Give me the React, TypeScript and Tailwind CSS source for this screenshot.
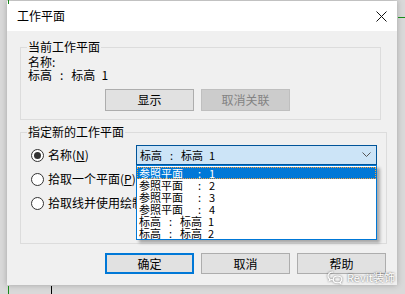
import React from "react"

const ui = "font-['Microsoft_YaHei','Noto_Sans_CJK_SC',sans-serif]"

function Radio({ checked }: { checked?: boolean }) {
  return (
    <span className="w-[13px] h-[13px] rounded-full border border-[#333333] bg-white flex items-center justify-center shrink-0">
      {checked && <span className="w-[7px] h-[7px] rounded-full bg-[#333333]" />}
    </span>
  )
}

function Btn({ label, disabled, primary, h = "h-[22px]" }: { label: string; disabled?: boolean; primary?: boolean; h?: string }) {
  let cls = "bg-[#e1e1e1] border border-[#adadad] text-black"
  if (disabled) cls = "bg-[#cccccc] border border-[#bfbfbf] text-[#838383]"
  if (primary) cls = "bg-[#e1e1e1] border-2 border-[#0078d7] text-black"
  return (
    <div className={`w-[89px] ${h} ${cls} flex items-center justify-center text-[12px] leading-none`}>
      {label}
    </div>
  )
}

// "A : B" text with the wide gaps the dialog font gives
function Level({ name, num, wide }: { name?: string; num: string; wide?: boolean }) {
  return (
    <span className="inline-flex items-baseline">
      <span>{name ? "标高" : "参照平面"}</span>
      <span className={wide ? "ml-[15px]" : "ml-[8px]"}>:</span>
      {name && <span className="ml-[8px]">{name}</span>}
      <span className={name ? "ml-[6px]" : "ml-[8px]"}>{num}</span>
    </span>
  )
}

const items = [
  { num: "1" },
  { num: "2" },
  { num: "3" },
  { num: "4" },
  { name: "标高", num: "1" },
  { name: "标高", num: "2" },
]

export default function App() {
  return (
    <div className={`relative w-[405px] h-[294px] overflow-hidden bg-[#d9d9d9] pt-[1px] pl-[7px] ${ui}`}>
      {/* stray lines behind the dialog */}
      <div className="absolute left-[8px] top-0 w-[1px] h-[4px] bg-[#1a8a1a]" />
      <div className="absolute left-[8px] top-[286px] w-[1px] h-[8px] bg-[#1a8a1a]" />
      <div className="absolute left-[51px] top-[286px] w-[1px] h-[8px] bg-black" />
      <div className="absolute left-[398px] top-[17px] w-[7px] h-[1px] bg-[#1a8a1a]" />

      <div className="w-[390px] h-[284px] bg-[#f0f0f0] flex flex-col shadow-[0_0_6px_rgba(0,0,0,0.25)]">
        <div className="h-[30px] bg-white flex items-center justify-between pl-[10px] pr-[10px] shrink-0">
          <span className="text-[12px] text-black">工作平面</span>
          <svg width="11" height="11" viewBox="0 0 11 11">
            <path d="M0.5 0.5 L10.5 10.5 M10.5 0.5 L0.5 10.5" stroke="#111" strokeWidth="1" />
          </svg>
        </div>

        <div className="flex flex-col pl-[13px] text-[12px] text-black">
          <fieldset className="mt-[9px] w-[361px] border border-[#dcdcdc] pl-[6px] pb-[8px]">
            <legend className="px-[1px] leading-[14px]">当前工作平面</legend>
            <div className="pl-[1px] pt-[1px] leading-[13px]">
              <div>名称:</div>
              <div>
                <Level name="标高" num="1" />
              </div>
            </div>
            <div className="flex gap-[7px] ml-[78px] mt-[8px]">
              <Btn label="显示" />
              <Btn label="取消关联" disabled />
            </div>
          </fieldset>

          <fieldset className="mt-[5px] w-[367px] border border-[#dcdcdc] pl-[6px] pb-[30px]">
            <legend className="px-[1px] leading-[14px]">指定新的工作平面</legend>
            <div className="ml-[4px] mt-[6px] flex flex-col gap-[4px]">
              <div className="flex items-center h-[20px]">
                <div className="w-[105px] flex items-center gap-[4px]">
                  <Radio checked />
                  <span>
                    名称(<span className="underline">N</span>)
                  </span>
                </div>
                <div className="relative w-[241px] h-[20px] bg-[#cce4f7] border border-[#005499] flex items-center justify-between pl-[3px] pr-[5px]">
                  <span className="text-[11px]">
                    <Level name="标高" num="1" />
                  </span>
                  <svg width="9" height="6" viewBox="0 0 9 6">
                    <path d="M0.5 0.5 L4.5 4.5 L8.5 0.5" fill="none" stroke="#555" strokeWidth="1" />
                  </svg>
                  <div className="absolute left-[-1px] top-[19px] z-10 w-[241px] h-[75px] bg-white border border-[#0078d7] shadow-[3px_3px_3px_rgba(0,0,0,0.3)] pt-[1px]">
                    {items.map((t, i) => (
                      <div
                        key={i}
                        className={
                          i === 0
                            ? "h-[12px] leading-[12px] pl-[2px] text-[11px] bg-[#0078d7] text-white outline-1 outline-dotted outline-[#f0a040] -outline-offset-1"
                            : "h-[12px] leading-[12px] pl-[2px] text-[11px] text-black"
                        }
                      >
                        <Level name={t.name} num={t.num} wide={!t.name} />
                      </div>
                    ))}
                  </div>
                </div>
              </div>
              <div className="flex items-center h-[20px] gap-[4px]">
                <Radio />
                <span>
                  拾取一个平面(<span className="underline">P</span>)
                </span>
              </div>
              <div className="flex items-center h-[20px] gap-[4px] whitespace-nowrap">
                <Radio />
                <span>拾取线并使用绘制该线的工作平面(L)</span>
              </div>
            </div>
          </fieldset>

          <div className="flex gap-[7px] ml-[85px] mt-[9px]">
            <Btn label="确定" primary h="h-[21px]" />
            <Btn label="取消" h="h-[21px]" />
            <Btn label="帮助" h="h-[21px]" />
          </div>
        </div>
      </div>

      {/* watermark */}
      <div className="absolute left-[327px] top-[271px] flex items-center gap-[4px] text-white text-[11px] leading-none [text-shadow:0_0_2px_rgba(0,0,0,0.7)]">
        <svg width="16" height="13" viewBox="0 0 16 13" className="drop-shadow-[0_0_1px_rgba(0,0,0,0.6)]">
          <path d="M6 1 C2.8 1 1 3 1 5 C1 6.3 1.7 7.3 2.7 8 L2.3 9.6 L4.2 8.6 C4.8 8.8 5.4 8.9 6 8.9" fill="none" stroke="white" strokeWidth="1.1" />
          <path d="M10.5 5 C8 5 6.3 6.6 6.3 8.4 C6.3 10.2 8 11.7 10.5 11.7 C11 11.7 11.5 11.6 12 11.5 L13.6 12.3 L13.2 10.9 C14.2 10.3 14.8 9.4 14.8 8.4 C14.8 6.6 13 5 10.5 5 Z" fill="none" stroke="white" strokeWidth="1.1" />
        </svg>
        <span>Revit装饰</span>
      </div>
    </div>
  )
}
